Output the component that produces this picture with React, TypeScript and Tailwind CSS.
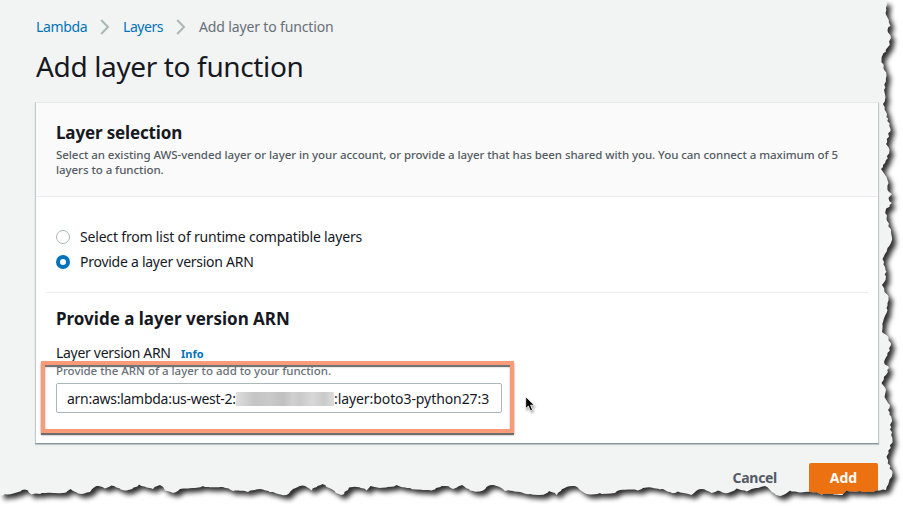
import React from "react";

type Point = [number, number];

const RIGHT_EDGE: Point[] = [
  [887, -6], [887, 3], [885.5, 13], [890.5, 26], [887.5, 30], [891, 38], [888, 47], [883.5, 53], [881.5, 60],
  [883.5, 68], [886.5, 76], [884, 90], [885.5, 97], [883, 104], [886, 112], [886.5, 117], [890.5, 129],
  [886, 144], [889.5, 150], [886, 160], [881, 169], [886.5, 177], [888.5, 183], [887.5, 190], [892, 194],
  [888.5, 198], [892, 203], [885.5, 211], [886.5, 219], [891, 232], [892, 240], [887.5, 248], [882.5, 259],
  [885.5, 270], [885.5, 280], [882, 285], [884.5, 292], [888.5, 296], [887.5, 303], [886.5, 313], [883, 322],
  [882, 332], [888.5, 337], [891, 345], [884, 362], [889, 368], [886, 375], [881.5, 383], [886, 390],
  [884.5, 397], [890, 405], [888, 410], [892, 420], [890, 425], [892.5, 440], [886.5, 457], [892.5, 473],
  [889, 482], [886, 490],
];

const BOTTOM_EDGE: Point[] = [
  [880, 490.5], [873, 492], [860, 491], [846.5, 490.5], [842.5, 495], [821.5, 494.5], [813, 492.5], [800, 492.5], [790, 490.5],
  [780, 496], [776, 495], [765, 486], [758, 488], [746.5, 491.5], [736.5, 488.5], [728, 493], [718, 490.5],
  [711.5, 493], [701, 489], [691.5, 495], [678, 491.5], [675, 493], [663, 489], [646.5, 487.5], [638, 490.5],
  [620, 490], [615, 493], [600, 493], [586.5, 494], [575, 486], [566.5, 487], [556.5, 495], [549, 491],
  [545, 494], [530, 494], [520, 492], [505, 491], [496.5, 486], [489, 485.5], [483, 490.5], [473, 491],
  [462, 485], [453, 489], [445, 486], [431.5, 490.5], [410, 488], [396.5, 485], [380, 488], [370.5, 486],
  [366.5, 490.5], [356.5, 487], [349, 487.5], [341.5, 495], [331.5, 489], [322.5, 484], [311.5, 490.5],
  [302.5, 485.5], [293, 489], [286.5, 495], [273, 492], [260, 489], [248, 492], [233, 491], [223, 487],
  [203, 486], [180, 489], [173, 493], [165, 490.5], [160, 485], [153, 489], [139, 484.5], [126.5, 490.5],
  [111.5, 485.5], [105, 488.5], [96.5, 486], [90, 492], [81.5, 494], [70.5, 489], [63, 493], [40, 494],
  [31.5, 494.5], [25, 489.5], [15, 493], [5, 494], [0, 495],
];

/** Subdivides an outline and nudges the new points, for a ragged paper edge. */
function roughen(points: Point[]): Point[] {
  const out: Point[] = [];
  points.forEach(([x, y], i) => {
    out.push([x, y]);
    const next = points[i + 1];
    if (!next) return;
    const steps = Math.floor(Math.hypot(next[0] - x, next[1] - y) / 2.5);
    for (let s = 1; s < steps; s++) {
      const t = s / steps;
      const n = Math.sin(i * 12.9 + s * 78.2) * 0.9;
      const m = Math.cos(i * 7.3 + s * 31.7) * 0.9;
      out.push([x + (next[0] - x) * t + n, y + (next[1] - y) * t + m]);
    }
  });
  return out;
}

const EDGE = roughen([...RIGHT_EDGE, ...BOTTOM_EDGE]).map(([x, y]) => `${x.toFixed(1)} ${y.toFixed(1)}`).join("L");
const PAPER = `M0 -6L${EDGE}Z`;

function TornEdge() {
  return (
    <svg className="pointer-events-none absolute inset-0" width="903" height="506" viewBox="0 0 903 506">
      <defs>
        <clipPath id="outside">
          <path d={`M-20 -20H930V530H-20Z${PAPER}`} clipRule="evenodd" />
        </clipPath>
        <clipPath id="below-top">
          <rect x="0" y="1" width="903" height="505" />
        </clipPath>
        <filter id="soft" x="-5%" y="-5%" width="110%" height="110%" colorInterpolationFilters="sRGB">
          <feGaussianBlur stdDeviation="2.6" />
        </filter>
      </defs>
      <g clipPath="url(#outside)">
        <rect width="903" height="506" fill="#fff" />
        <g filter="url(#soft)">
          <g transform="translate(4 4)">
            <path d={PAPER} fill="#000" fillOpacity="0.82" clipPath="url(#below-top)" />
          </g>
        </g>
      </g>
    </svg>
  );
}

function Chevron() {
  return (
    <svg width="10" height="16" viewBox="0 0 10 16" fill="none" stroke="#aab7b8" strokeWidth="2">
      <path d="M1.2 1L8 8L1.2 15" />
    </svg>
  );
}

function Radio({ label, checked }: { label: string; checked?: boolean }) {
  return (
    <label className="flex h-[25px] items-center">
      <span
        className={
          checked
            ? "mr-[10px] size-[14px] rounded-full border-[4px] border-[#0073bb] bg-white"
            : "mr-[10px] size-[14px] rounded-full border border-[#aab7b8] bg-white"
        }
      />
      <span className={checked ? "tracking-[-0.26px]" : "tracking-[-0.18px]"}>{label}</span>
    </label>
  );
}

export default function App() {
  return (
    <div className="relative h-[506px] w-[903px] overflow-hidden bg-[#f2f3f3] font-['Noto_Sans','Open_Sans',sans-serif] text-[14px] leading-[20px] text-[#16191f]">
      <div className="flex flex-col pr-[24px] pl-[35px]">
        <nav className="mt-[17px] ml-px flex h-[20px] items-center whitespace-nowrap text-[#0073bb]">
          <a className="w-[64px] tracking-[-0.35px]">Lambda</a>
          <span className="w-[23px]"><Chevron /></span>
          <a className="w-[53px] tracking-[-0.45px]">Layers</a>
          <span className="w-[23px]"><Chevron /></span>
          <span className="tracking-[-0.14px] text-[#687078]">Add layer to function</span>
        </nav>
        <h1 className="mt-[11px] ml-px h-[36px] text-[28px] leading-[36px] tracking-[-0.36px] whitespace-nowrap">Add layer to function</h1>

        <section className="mt-[18px] flex h-[342px] flex-col border-x border-t border-b border-x-[#c3cacb] border-t-[#e4e8e8] border-b-[#879596] bg-white shadow-[0_1px_1px_0_rgba(0,28,36,0.2)]">
          <header className="h-[94px] border-b border-[#eaeded] bg-[#fafafa] px-[20px] pt-[18px]">
            <h2 className="text-[17px] leading-[24px] font-bold tracking-[-0.15px]">Layer selection</h2>
            <p className="mt-[2px] text-[11.5px] leading-[15px] font-medium tracking-[-0.058px] whitespace-nowrap text-[#545b64]">
              Select an existing AWS-vended layer or layer in your account, or provide a layer that has been shared with you. You can connect a maximum of 5
              <br />
              layers to a function.
            </p>
          </header>
          <div className="mx-[10px] h-[96px] border-b border-[#eaeded] px-[10px] pt-[27px]">
            <Radio label="Select from list of runtime compatible layers" />
            <Radio label="Provide a layer version ARN" checked />
          </div>
          <div className="px-[20px] pt-[14px]">
            <h2 className="text-[17px] leading-[24px] font-bold whitespace-nowrap">Provide a layer version ARN</h2>
            <div className="mt-[12px] flex h-[20px] items-center">
              <span className="w-[125px] tracking-[-0.3px] whitespace-nowrap">Layer version ARN</span>
              <a className="pt-[2px] text-[11px] font-bold text-[#0073bb]">Info</a>
            </div>
            <div className="relative">
              <p className="h-[20px] text-[11.5px] leading-[16px] font-medium tracking-[-0.02px] whitespace-nowrap text-[#687078]">Provide the ARN of a layer to add to your function.</p>
              <div className="flex h-[30px] w-[446px] items-center rounded-[2px] border border-[#aab7b8] bg-white px-[10px] pt-px whitespace-nowrap">
                <span className="w-[169px] tracking-[-0.27px]">arn:aws:lambda:us-west-2:</span>
                <span className="h-[14px] w-[98px] bg-[linear-gradient(90deg,#dedede,#c5c5c5_18%,#c9c9c9_35%,#c0c0c0_48%,#d0d0d0_58%,#c9c9c9_65%,#d8d8d8_78%,#cacaca_90%,#dcdcdc)]" />
                <span className="tracking-[-0.08px]">:layer:boto3-python27:3</span>
              </div>
              <div className="absolute -top-[2px] -left-[15px] h-[72px] w-[473px] border-[4px] border-[#f99b78] shadow-[0_2px_0_#6e6e6e,0_2px_2px_rgba(0,0,0,0.45),inset_0_2px_0_#737373,inset_0_2px_2px_rgba(0,0,0,0.35)]" />
            </div>
          </div>
        </section>

        <footer className="mt-[19px] mr-px flex h-[31px] items-center justify-end font-bold">
          <button className="mr-[32px] pb-[2px] tracking-[-0.3px] text-[#545b64]">Cancel</button>
          <button className="h-[31px] w-[69px] rounded-[2px] bg-[#ec7211] pb-[2px] text-white">Add</button>
        </footer>
      </div>

      <svg className="absolute top-[396px] left-[525px] drop-shadow-[1px_2px_1px_rgba(0,0,0,0.35)]" width="10" height="17" viewBox="0 0 10 17">
        <path d="M0.7 0.8V12.6L3.4 10L5.4 14.8L7.6 13.9L5.6 9.2H9.3Z" fill="#000" stroke="#fff" strokeWidth="0.8" />
      </svg>
      <TornEdge />
    </div>
  );
}
